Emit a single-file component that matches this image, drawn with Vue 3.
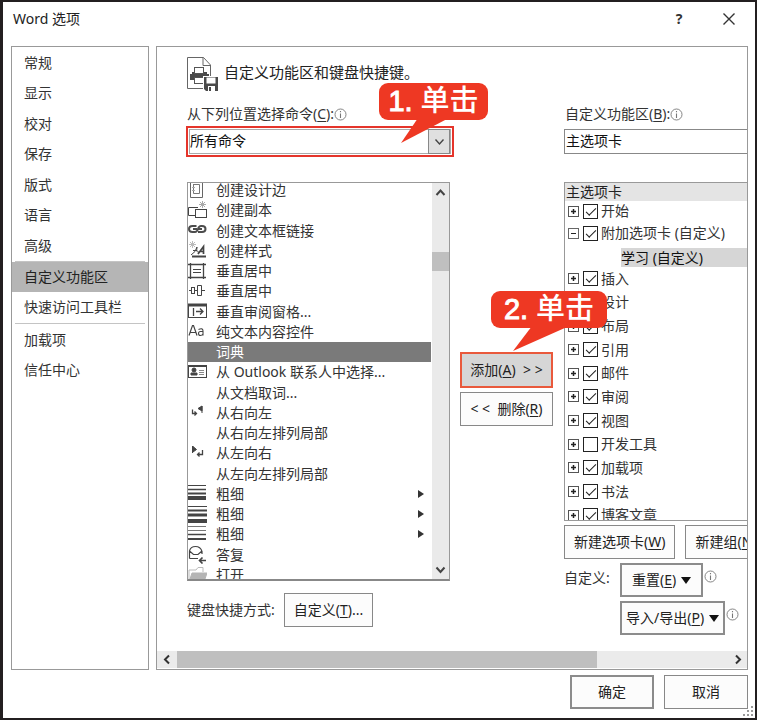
<script setup>
import { ref } from 'vue'

const navMain = ['常规', '显示', '校对', '保存', '版式', '语言', '高级']
const navCustom = ['自定义功能区', '快速访问工具栏']
const navOther = ['加载项', '信任中心']
const activeNav = ref('自定义功能区')

const commands = [
  { text: '创建设计边', icon: 'border' },
  { text: '创建副本', icon: 'copy' },
  { text: '创建文本框链接', icon: 'link' },
  { text: '创建样式', icon: 'style' },
  { text: '垂直居中', icon: 'vpage' },
  { text: '垂直居中', icon: 'valign' },
  { text: '垂直审阅窗格...', icon: 'pane' },
  { text: '纯文本内容控件', icon: 'aa' },
  { text: '词典', icon: '' },
  { text: '从 Outlook 联系人中选择...', icon: 'contact' },
  { text: '从文档取词...', icon: '' },
  { text: '从右向左', icon: 'rtl' },
  { text: '从右向左排列局部', icon: '' },
  { text: '从左向右', icon: 'ltr' },
  { text: '从左向左排列局部', icon: '' },
  { text: '粗细', icon: 'weight1', more: true },
  { text: '粗细', icon: 'weight2', more: true },
  { text: '粗细', icon: 'weight3', more: true },
  { text: '答复', icon: 'reply' },
  { text: '打开', icon: 'folder' }
]
const selectedCommand = ref(8)

const tabs = ref([
  { text: '插入', on: true },
  { text: '设计', on: true },
  { text: '布局', on: true },
  { text: '引用', on: true },
  { text: '邮件', on: true },
  { text: '审阅', on: true },
  { text: '视图', on: true },
  { text: '开发工具', on: false },
  { text: '加载项', on: true },
  { text: '书法', on: true },
  { text: '博客文章', on: true }
])
const homeOn = ref(true)
const extraOn = ref(true)
</script>

<template>
  <div class="dialog">
    <header class="titlebar">
      <h1>Word 选项</h1>
      <button class="tool help" type="button" aria-label="帮助">?</button>
      <button class="tool" type="button" aria-label="关闭">
        <svg width="14" height="14" viewBox="0 0 14 14"><path d="M1.5 1.5L12.5 12.5M12.5 1.5L1.5 12.5" fill="none" stroke="#333" stroke-width="1.4" /></svg>
      </button>
    </header>

    <div class="body">
      <nav class="sidebar">
        <div class="nav-main">
          <button v-for="n in navMain" :key="n" type="button" class="nav-item" @click="activeNav = n">{{ n }}</button>
        </div>
        <hr />
        <button v-for="n in navCustom" :key="n" type="button" class="nav-item" :class="{ active: n === activeNav }" @click="activeNav = n">{{ n }}</button>
        <hr />
        <button v-for="n in navOther" :key="n" type="button" class="nav-item" @click="activeNav = n">{{ n }}</button>
      </nav>

      <main class="panel">
        <div class="content">
          <div class="heading">
            <svg width="32" height="35" viewBox="0 0 32 35">
              <path d="M.5 .5H16.500L23.500 8V31.500H.5Z" fill="#fff" stroke="#666" />
              <path d="M16 .5V8.500H23.500" fill="none" stroke="#666" />
              <path d="M3 17H5V15H8V17H17V15H20V17H22V23H3Z" fill="#4a4a4a" />
              <rect x="7.500" y="10.500" width="9" height="6" fill="#fff" stroke="#555" />
              <rect x="7.500" y="20.500" width="9" height="6" fill="#fff" stroke="#555" />
              <rect x="16" y="19" width="16" height="16" fill="#fff" />
              <path d="M17 20H31V34H19L17 32Z" fill="#4a4a4a" />
              <rect x="19.500" y="20.500" width="9" height="6" fill="#fff" />
              <rect x="21" y="29" width="7" height="5" fill="#fff" />
              <rect x="22" y="30" width="2" height="4" fill="#4a4a4a" />
            </svg>
            <h2>自定义功能区和键盘快捷键。</h2>
          </div>

          <div class="columns">
            <section class="col-left">
              <div class="caption">
                <label for="source">从下列位置选择命令(<u>C</u>):</label>
                <svg class="info" width="13" height="13" viewBox="0 0 13 13"><circle cx="6.500" cy="6.500" r="5.500" fill="none" stroke="#777" stroke-width=".9" /><path d="M6.500 5.500V10M6.500 3V4.300" stroke="#777" stroke-width="1.100" /></svg>
              </div>
              <div class="field marked">
                <select id="source"><option>所有命令</option></select>
                <span class="drop">
                  <svg width="11" height="8" viewBox="0 0 11 8"><path d="M1.500 1.500L5.500 6L9.500 1.500" fill="none" stroke="#444" stroke-width="1.400" /></svg>
                </span>
                <div class="callout first">
                  <svg class="tail" width="46" height="26" viewBox="0 0 46 26"><path d="M17 0H46V1L0 25Z" fill="#ee3823" /></svg>
                  <span><span class="num">1.</span> 单击</span>
                </div>
              </div>

              <div class="listbox">
                <ul role="listbox" aria-label="命令">
                  <li v-for="(c, i) in commands" :key="i" role="option" :aria-selected="i === selectedCommand" :class="{ selected: i === selectedCommand }" @click="selectedCommand = i">
                    <svg class="glyph" width="19" height="19" viewBox="0 0 19 19" fill="none" stroke="#444">
                      <g v-if="c.icon === 'border'"><path d="M2.500 0V16.500H14.500V0" stroke="#666" /><path d="M5.500 3V12.500H11.500V3.500H5" stroke="#777" /><path d="M4 6.500H7M4 9.500H7" stroke="#aaa" /></g>
                      <g v-else-if="c.icon === 'copy'"><path d="M7 14.500H.5V6.500H10" /><rect x="7.500" y="8.500" width="11" height="8" fill="#fff" /><path d="M14.500 0V7M11 3.500H18M12 1L17 6M17 1L12 6" stroke="#aaa" /></g>
                      <g v-else-if="c.icon === 'link'"><path d="M8.500 5H4.500Q1 5 1 8T4.500 11H7Q9 11 10 8T13 5H14Q17.500 5 17.500 8T14 11H10M5 8H9M10 8H14" stroke="#4c4c4c" stroke-width="2" /></g>
                      <g v-else-if="c.icon === 'style'"><path d="M4.500 0V7M1 3.500H8M2 1L7 6M7 1L2 6" stroke="#bbb" /><path d="M3 14Q8 11 9 6Q8 12 11 11M5 9.500H9" /><path d="M10 13L15.500 5.500V13M12 10.500H15" stroke-width="1.700" /><path d="M4 15.500H18" stroke-width="2" /></g>
                      <g v-else-if="c.icon === 'vpage'"><path d="M2.500 1V17M15.500 1V17M0 2.500H18M0 15.500H18" stroke-width="1.300" /><path d="M5 7.500H13M5 10.500H13" /></g>
                      <g v-else-if="c.icon === 'valign'"><path d="M1 8.500H4M7 8.500H10M14 8.500H17" /><rect x="3.500" y="5.500" width="3" height="6" /><path d="M8.500 8.500H9.500M9.500 3.500H13.500V13.500H9.500Z" /></g>
                      <g v-else-if="c.icon === 'pane'"><rect x=".5" y="2.500" width="18" height="13" /><path d="M0 3H19" stroke-width="3" /><path d="M5.500 6V14M8 9.500H15M12 6.500L15 9.500L12 12.500" stroke-width="1.300" /></g>
                      <g v-else-if="c.icon === 'aa'"><path d="M1 13.500L4.500 3.500H5.500L9 13.500M2.500 10.500H7.500" stroke-width="1.200" /><path d="M10.500 7.500Q15 5.500 15 9V13.500M15 9.500H12.500Q10.500 9.500 10.500 11.500T12.500 13.500Q14 13.500 15 12" stroke-width="1.100" /></g>
                      <g v-else-if="c.icon === 'contact'"><rect x=".5" y="2.500" width="18" height="12" /><path d="M0 3H19" stroke-width="2" /><circle cx="6" cy="7" r="2" fill="#444" /><path d="M3 12V10H9V12Z" fill="#444" /><path d="M11 7.500H16M11 9.500H16M11 11.500H16" stroke="#888" /></g>
                      <g v-else-if="c.icon === 'rtl'"><path d="M4.500 6.500V10.500H8M6.500 8.500L8.500 10.500L6.500 12.500" stroke="#444" stroke-width="1.300" /><path d="M14 3V10M10 5.500L14 3V8Z" fill="#444" /></g>
                      <g v-else-if="c.icon === 'ltr'"><path d="M4.500 2V9M5 2.500L8.500 5.500L5 8Z" fill="#444" /><path d="M14.500 6V10.500H9.500M11.500 8.500L9.500 10.500L11.500 12.500" stroke="#444" stroke-width="1.300" /></g>
                      <g v-else-if="c.icon === 'weight1'"><path d="M0 1.500H18" /><path d="M0 5.500H18" stroke-width="1.500" /><path d="M0 9.500H18" stroke-width="2" /><path d="M0 14H18" stroke-width="4" /></g>
                      <g v-else-if="c.icon === 'weight2'"><path d="M0 1.500H19" /><path d="M0 5.500H19" stroke-width="2" /><path d="M0 10H19" stroke-width="3" /><path d="M0 16H19" stroke-width="4" /></g>
                      <g v-else-if="c.icon === 'weight3'"><path d="M0 1.500H18M0 5.500H18" stroke="#777" /><path d="M0 9.500H18" stroke-width="1.500" /><path d="M0 14H18" stroke-width="2" /></g>
                      <g v-else-if="c.icon === 'reply'"><path d="M1.500 13.500V6Q2.500 1.500 7.500 1.500T14 6.500V9M1.500 6L5.500 9.500H10L14 6M1.500 13.500H10" stroke-width="1.200" /><path d="M18 15.500H12M14.500 12.500L11.500 15.500L14.500 18.500" stroke-width="1.600" /></g>
                      <g v-else-if="c.icon === 'folder'"><path d="M1 17V5H8L10 2.500H15V7" stroke="#bbb" /><path d="M1 17L4 8H19L16 17Z" fill="#b5b5b5" stroke="#b5b5b5" /></g>
                    </svg>
                    <span class="name">{{ c.text }}</span>
                    <svg v-if="c.more" width="6" height="8" viewBox="0 0 6 8"><path d="M0 0L6 4L0 8Z" fill="#333" /></svg>
                  </li>
                </ul>
                <div class="vscroll">
                  <svg width="11" height="18" viewBox="0 0 11 18"><path d="M1.500 12L5.500 7.500L9.500 12" fill="none" stroke="#444" stroke-width="2" /></svg>
                  <div class="vtrack"><div class="vthumb"></div></div>
                  <svg width="11" height="18" viewBox="0 0 11 18"><path d="M1.500 6.500L5.500 11L9.500 6.500" fill="none" stroke="#444" stroke-width="2" /></svg>
                </div>
              </div>

              <div class="shortcut">
                <span>键盘快捷方式:</span>
                <button type="button" class="btn">自定义(<u>T</u>)...</button>
              </div>
            </section>

            <section class="col-mid">
              <div class="add-wrap">
                <button type="button" class="btn add">添加(<u>A</u>)&nbsp; &gt; &gt;</button>
                <div class="callout second">
                  <svg class="tail" width="54" height="26" viewBox="0 0 54 26"><path d="M19 0H54V1L0 25Z" fill="#ee3823" /></svg>
                  <span><span class="num">2.</span> 单击</span>
                </div>
              </div>
              <button type="button" class="btn">&lt; &lt;&nbsp; 删除(<u>R</u>)</button>
            </section>

            <section class="col-right">
              <div class="caption">
                <label for="ribbon">自定义功能区(<u>B</u>):</label>
                <svg class="info" width="13" height="13" viewBox="0 0 13 13"><circle cx="6.500" cy="6.500" r="5.500" fill="none" stroke="#777" stroke-width=".9" /><path d="M6.500 5.500V10M6.500 3V4.300" stroke="#777" stroke-width="1.100" /></svg>
              </div>
              <div class="field">
                <select id="ribbon"><option>主选项卡</option></select>
              </div>
              <div class="tree">
                <div class="tree-head">主选项卡</div>
                <div class="node home">
                  <button type="button" class="expander" aria-label="展开 开始"><svg width="11" height="11" viewBox="0 0 11 11"><rect x=".5" y=".5" width="10" height="10" fill="#fff" stroke="#555" /><path d="M3 5.500H8M5.500 3V8" stroke="#222" stroke-width="1.500" /></svg></button>
                  <label><input v-model="homeOn" type="checkbox" />开始</label>
                </div>
                <div class="node extra">
                  <button type="button" class="expander" aria-label="折叠 附加选项卡"><svg width="11" height="11" viewBox="0 0 11 11"><rect x=".5" y=".5" width="10" height="10" fill="#fff" stroke="#666" /><path d="M3 5.500H8" stroke="#222" /></svg></button>
                  <label><input v-model="extraOn" type="checkbox" />附加选项卡 (自定义)</label>
                </div>
                <div class="sub">学习 (自定义)</div>
                <div class="nodes">
                  <div v-for="t in tabs" :key="t.text" class="node">
                    <button type="button" class="expander" :aria-label="'展开 ' + t.text"><svg width="11" height="11" viewBox="0 0 11 11"><rect x=".5" y=".5" width="10" height="10" fill="#fff" stroke="#555" /><path d="M3 5.500H8M5.500 3V8" stroke="#222" stroke-width="1.500" /></svg></button>
                    <label><input v-model="t.on" type="checkbox" />{{ t.text }}</label>
                  </div>
                </div>
              </div>
              <div class="new-row">
                <button type="button" class="btn">新建选项卡(<u>W</u>)</button>
                <button type="button" class="btn">新建组(<u>N</u>)</button>
              </div>
              <div class="custom">
                <span class="custom-label">自定义:</span>
                <div class="custom-btns">
                  <div class="with-info">
                    <button type="button" class="btn thick"><span>重置(<u>E</u>)</span><svg width="10" height="7" viewBox="0 0 10 7"><path d="M0 0H10L5 7Z" fill="#111" /></svg></button>
                    <svg class="info" width="13" height="13" viewBox="0 0 13 13"><circle cx="6.500" cy="6.500" r="5.500" fill="none" stroke="#777" stroke-width=".9" /><path d="M6.500 5.500V10M6.500 3V4.300" stroke="#777" stroke-width="1.100" /></svg>
                  </div>
                  <div class="with-info">
                    <button type="button" class="btn thick"><span>导入/导出(<u>P</u>)</span><svg width="10" height="7" viewBox="0 0 10 7"><path d="M0 0H10L5 7Z" fill="#111" /></svg></button>
                    <svg class="info" width="13" height="13" viewBox="0 0 13 13"><circle cx="6.500" cy="6.500" r="5.500" fill="none" stroke="#777" stroke-width=".9" /><path d="M6.500 5.500V10M6.500 3V4.300" stroke="#777" stroke-width="1.100" /></svg>
                  </div>
                </div>
              </div>
            </section>
          </div>
        </div>

        <div class="hscroll">
          <svg width="20" height="17" viewBox="0 0 20 17"><path d="M12 4.500L8 8.500L12 12.500" fill="none" stroke="#333" stroke-width="2" /></svg>
          <div class="htrack"><div class="hthumb"></div></div>
          <svg width="18" height="17" viewBox="0 0 18 17"><path d="M7 4.500L11 8.500L7 12.500" fill="none" stroke="#333" stroke-width="2" /></svg>
        </div>
      </main>
    </div>

    <footer class="footer">
      <button type="button" class="btn thick">确定</button>
      <button type="button" class="btn">取消</button>
      <svg class="grip" width="10" height="10" viewBox="0 0 10 10" fill="#999"><path d="M8 0h2v2h-2zM4 4h2v2h-2zM8 4h2v2h-2zM0 8h2v2h-2zM4 8h2v2h-2zM8 8h2v2h-2z" /></svg>
    </footer>
  </div>
</template>

<style>
body {
  background: #fff;
}
</style>

<style scoped>
.dialog {
  box-sizing: border-box;
  height: 100vh;
  min-height: 600px;
  display: flex;
  flex-direction: column;
  position: relative;
  border: 2px solid #231f20;
  border-left-width: 3px;
  background: #fff;
  color: #333;
  font: 14px/20px "Noto Sans", "Noto Sans CJK SC", sans-serif;
}
.dialog *,
.dialog *::after {
  box-sizing: border-box;
}
button,
select,
input {
  margin: 0;
  font: inherit;
  color: inherit;
}
button {
  white-space: nowrap;
}
svg {
  display: block;
  flex: none;
}
u {
  text-underline-offset: 2px;
}
h1,
h2 {
  margin: 0;
  font-weight: 400;
}
.titlebar {
  display: flex;
  align-items: center;
  height: 44px;
  padding: 0 11px 10px 10px;
}
h1 {
  flex: 1;
  font-size: 14px;
  color: #222;
}
.tool {
  display: flex;
  align-items: center;
  justify-content: center;
  width: 30px;
  height: 28px;
  padding: 0;
  border: 0;
  background: none;
}
.help {
  margin-right: 20px;
  font-weight: 700;
}
.body {
  flex: 1;
  min-height: 0;
  display: flex;
  gap: 7px;
  padding: 0 7px 0 8px;
}
.sidebar {
  flex: none;
  width: 138px;
  border: 1px solid #999;
}
.nav-main {
  display: grid;
  grid-auto-rows: 1fr;
  height: 214px;
  padding-top: 1px;
}
.nav-item {
  display: block;
  width: 100%;
  height: 30px;
  padding: 0 0 0 12px;
  border: 0;
  background: none;
  text-align: left;
}
.nav-item.active {
  background: #b5b5b5;
  color: #222;
}
.sidebar hr {
  height: 1px;
  margin: 0 3px;
  border: 0;
  background: #c4c4c4;
}
.nav-item + hr {
  margin: 1px 3px;
}
.panel {
  flex: 1;
  min-width: 0;
  display: flex;
  flex-direction: column;
  border: 1px solid #999;
}
.content {
  flex: 1;
  min-height: 0;
  display: flex;
  flex-direction: column;
  overflow: hidden;
  padding: 10px 0 0 29px;
}
.heading {
  display: flex;
  gap: 5px;
  height: 46px;
  padding-left: 1px;
}
h2 {
  font-size: 15px;
  line-height: 31px;
  color: #222;
}
.columns {
  flex: 1;
  min-height: 0;
  display: flex;
}
.col-left {
  flex: none;
  width: 268px;
  display: flex;
  flex-direction: column;
  padding-bottom: 24px;
}
.caption {
  display: flex;
  align-items: center;
  height: 23px;
  padding: 0 0 1px 1px;
  white-space: nowrap;
}
.field {
  position: relative;
  height: 31px;
  margin-bottom: 25px;
  padding: 3px 0;
}
.field select {
  display: block;
  width: 100%;
  height: 25px;
  padding: 0 1px 2px;
  border: 1px solid #888;
  border-radius: 0;
  background: #fff;
  appearance: none;
  color: #111;
}
.field.marked {
  padding: 1px;
  border: 2px solid #e5352b;
}
.marked select {
  border-color: #aaa;
  padding-left: 0;
}
.drop {
  position: absolute;
  top: 1px;
  right: 2px;
  display: flex;
  align-items: center;
  justify-content: center;
  width: 22px;
  height: 25px;
  border: 1px solid #888;
  background: #e0e0e0;
  pointer-events: none;
}
.callout {
  position: absolute;
  z-index: 3;
  height: 37px;
  border-radius: 9px;
  background: #ee3823;
  color: #fff;
  font: 500 29px/36px "Liberation Sans", "Noto Sans CJK SC", sans-serif;
  text-align: center;
  white-space: nowrap;
}
.num {
  -webkit-text-stroke: 1px #fff;
}
.tail {
  position: absolute;
  top: 35px;
  left: 22px;
}
.first {
  left: 191px;
  top: -45px;
  width: 109px;
}
.second {
  left: 31px;
  top: -61px;
  width: 116px;
}
.listbox {
  flex: 1;
  min-height: 0;
  display: flex;
  overflow: hidden;
  margin: 0 4px 12px 1px;
  border: 1px solid #999;
  border-bottom: 2px solid #888;
}
.listbox ul {
  flex: 1;
  display: grid;
  grid-auto-rows: 1fr;
  height: 405px;
  margin: -3px 0 0;
  padding: 0;
  list-style: none;
}
.listbox li {
  display: flex;
  align-items: center;
  min-height: 0;
  gap: 9px;
  padding-right: 7px;
  white-space: nowrap;
}
.listbox li.selected {
  background: #7a7a7a;
  color: #fff;
}
.name {
  flex: 1;
}
.vscroll {
  flex: none;
  width: 18px;
  display: flex;
  flex-direction: column;
  align-items: center;
  border-left: 1px solid #fff;
  background: #eaeaea;
}
.vtrack {
  flex: 1;
  width: 100%;
  padding-top: 51px;
}
.vthumb {
  height: 19px;
  background: #bfbfbf;
}
.shortcut {
  display: flex;
  align-items: center;
  gap: 9px;
  padding-left: 1px;
  white-space: nowrap;
}
.btn {
  height: 34px;
  padding: 0 9px;
  border: 1px solid #888;
  border-radius: 0;
  background: #fcfcfc;
  color: #222;
}
.btn.thick {
  border-width: 2px;
  border-color: #8c8c8c;
}
.col-mid {
  flex: none;
  width: 93px;
  margin: 249px 11px 0 6px;
  display: flex;
  flex-direction: column;
  gap: 4px;
}
.col-mid .btn {
  width: 100%;
  padding: 0;
}
.add-wrap {
  position: relative;
}
.col-mid .add {
  display: block;
  height: 36px;
  border: 2px solid #e9593c;
  background: #d6d6d6;
}
.col-right {
  flex: 1;
  min-width: 0;
  display: flex;
  flex-direction: column;
  padding-bottom: 16px;
}
.col-right select {
  border-right: 0;
}
.tree {
  flex: 1;
  min-height: 0;
  overflow: hidden;
  border: 1px solid #999;
  border-right: 0;
}
.tree-head {
  height: 18px;
  padding-left: 1px;
  line-height: 18px;
  background: #e4e4e4;
  color: #222;
}
.nodes {
  display: grid;
  grid-auto-rows: 1fr;
  height: 260px;
}
.node {
  display: flex;
  align-items: center;
  gap: 4px;
  min-height: 0;
  padding-left: 3px;
  white-space: nowrap;
}
.home {
  height: 20px;
}
.extra {
  height: 24px;
}
.node label {
  display: flex;
  align-items: center;
  gap: 3px;
}
.expander {
  padding: 0;
  border: 0;
  background: none;
}
input[type="checkbox"] {
  display: flex;
  justify-content: center;
  width: 15px;
  height: 15px;
  border: 1px solid #222;
  background: #fff;
  appearance: none;
}
input[type="checkbox"]:checked::after {
  content: "";
  width: 10px;
  height: 5px;
  margin-top: 3px;
  border: solid #222;
  border-width: 0 0 1px 1px;
  transform: rotate(-45deg);
}
.sub {
  height: 19px;
  margin: 3px 0 0 56px;
  line-height: 19px;
  background: #d6d6d6;
  color: #111;
  white-space: nowrap;
}
.new-row {
  display: flex;
  gap: 10px;
  margin: 4px 0;
  overflow: hidden;
}
.new-row .btn {
  flex: none;
}
.custom {
  display: flex;
  gap: 12px;
  white-space: nowrap;
}
.custom-label {
  width: 44px;
  line-height: 30px;
}
.custom-btns {
  display: flex;
  flex-direction: column;
  gap: 4px;
}
.with-info {
  display: flex;
  gap: 1px;
}
.with-info .btn {
  display: flex;
  align-items: center;
  gap: 5px;
  padding: 0 4px;
}
.with-info:first-child .btn {
  padding: 0 10px;
}
.with-info .info {
  margin-top: 7px;
}
.hscroll {
  display: flex;
  height: 18px;
  border-bottom: 1px solid #fff;
  background: #ebebeb;
}
.htrack {
  flex: 1;
}
.hthumb {
  width: 76%;
  height: 17px;
  background: #bfbfbf;
}
.footer {
  display: flex;
  justify-content: flex-end;
  gap: 10px;
  padding: 5px 7px 9px;
}
.footer .btn {
  width: 84px;
}
.grip {
  position: absolute;
  right: 2px;
  bottom: 2px;
}
</style>
